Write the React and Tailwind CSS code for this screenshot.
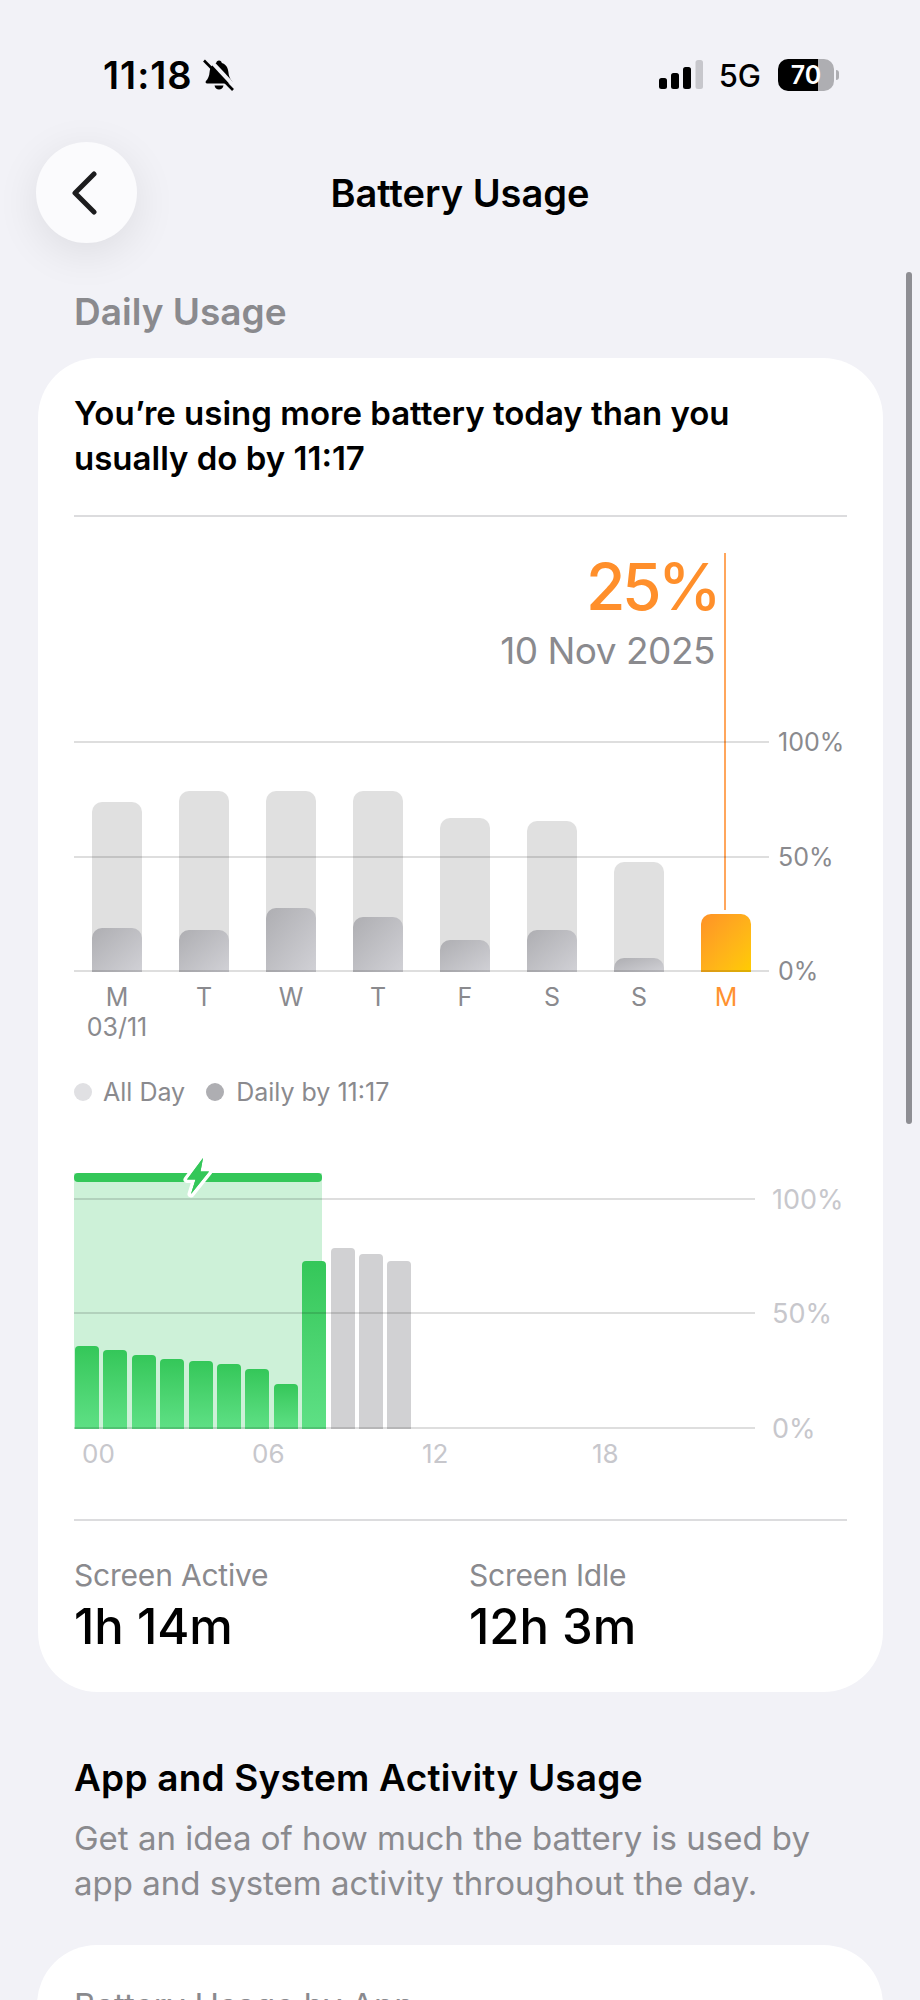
const week = [
  { day: "M", sub: "03/11", all: 170, daily: 44 },
  { day: "T", all: 181, daily: 42 },
  { day: "W", all: 181, daily: 64 },
  { day: "T", all: 181, daily: 55 },
  { day: "F", all: 154, daily: 32 },
  { day: "S", all: 151, daily: 42 },
  { day: "S", all: 110, daily: 14 },
  { day: "M", today: 58 },
];

const hours = [
  { h: 83, green: true },
  { h: 79, green: true },
  { h: 74, green: true },
  { h: 70, green: true },
  { h: 68, green: true },
  { h: 65, green: true },
  { h: 60, green: true },
  { h: 45, green: true },
  { h: 168, green: true },
  { h: 181 },
  { h: 175 },
  { h: 168 },
];

function StatusBar() {
  return (
    <div className="h-[142px] pt-[58px] pl-[103px] pr-[81px] flex justify-between items-start">
      <div className="flex items-center h-[34px] gap-[10px]">
        <span className="text-[38px] font-semibold leading-none tracking-[1px] text-black">11:18</span>
        <svg width="32" height="32" viewBox="0 0 32 32">
          <path d="M16 1.5c1.6 0 2.6 1 2.8 2.4 4 1.2 6.2 4.6 6.6 9 .3 4 1.4 6.6 3.6 9 .9 1 .3 2.6-1.2 2.6H4.2c-1.5 0-2.1-1.6-1.2-2.6 2.2-2.4 3.3-5 3.6-9 .4-4.4 2.6-7.8 6.6-9 .2-1.4 1.2-2.4 2.8-2.4z" fill="#000" />
          <path d="M11.5 26.500h9c-.4 2.400-2.300 4-4.500 4s-4.100-1.600-4.500-4z" fill="#000" />
          <path d="M5 -1L32 28" stroke="#f2f2f7" strokeWidth="4" />
          <path d="M1 1.500L30 31" stroke="#000" strokeWidth="2.600" />
        </svg>
      </div>
      <div className="flex items-center h-[34px]">
        <svg width="44" height="30" viewBox="0 0 44 30" className="mr-[16px]">
          <rect x="0" y="18" width="8" height="11" rx="2.500" fill="#000" />
          <rect x="12" y="13" width="8" height="16" rx="2.500" fill="#000" />
          <rect x="24" y="7" width="8" height="22" rx="2.500" fill="#000" />
          <rect x="36.500" y="0" width="7.500" height="29" rx="2.500" fill="#c7c7cc" />
        </svg>
        <span className="text-[31px] font-medium leading-none text-black mr-[17px]">5G</span>
        <div className="relative flex w-[56px] h-[32px] rounded-[10px] overflow-hidden">
          <div className="w-[40px] bg-black"></div>
          <div className="flex-1 bg-[#aeaeb2]"></div>
          <span className="absolute inset-0 flex items-center justify-center text-[25px] font-semibold leading-none text-white">70</span>
        </div>
        <div className="ml-[2px] w-[3px] h-[10px] rounded-r-[3px] bg-[#aeaeb2]"></div>
      </div>
    </div>
  );
}

function NavBar() {
  return (
    <div className="grid grid-cols-[100px_1fr_100px] items-center px-[36px] h-[100px]">
      <div className="w-[101px] h-[101px] rounded-full bg-[#fbfbfd] shadow-[0_10px_44px_rgba(0,0,0,0.09)] flex items-center justify-center">
        <svg width="30" height="44" viewBox="0 0 30 44" className="mr-[6px]">
          <path d="M25 3L6 22L25 41" fill="none" stroke="#1c1c1e" strokeWidth="5" strokeLinecap="round" strokeLinejoin="round" />
        </svg>
      </div>
      <div className="text-center text-[38px] font-semibold leading-[44px] text-black">Battery Usage</div>
      <div></div>
    </div>
  );
}

function GridLine({ className }) {
  return <div className={`absolute left-0 h-[2px] bg-black/[0.13] ${className}`}></div>;
}

function AxisLabel({ className, children }) {
  return <div className={`absolute leading-[32px] -translate-y-1/2 ${className}`}>{children}</div>;
}

function DailyChart() {
  return (
    <div className="relative mt-[36px]">
      <div className="absolute top-0 left-[650px] w-[2px] h-[357px] bg-[#ffa65c]"></div>
      <div className="w-[641px] pt-[2px] text-right">
        <div className="-mr-[3px] text-[64px] font-medium leading-[64px] tracking-[-3.500px] text-[#ff8f2b]">25%</div>
        <div className="mt-[10px] text-[37px] leading-[44px] tracking-[-0.5px] text-[#8a8a8e]">10 Nov 2025</div>
      </div>
      <div className="relative mt-[68px] h-[231px]">
        <div className="absolute bottom-0 -left-[0.500px] w-[696px] grid grid-cols-8 items-end">
          {week.map((d, i) => (
            <div key={i} className="relative h-[230px] flex justify-center items-end">
              {d.today ? (
                <div className="w-[50px] rounded-t-[10px] bg-linear-to-br from-[#ff9226] to-[#ffcc00]" style={{ height: d.today }}></div>
              ) : (
                <div className="relative w-[50px] rounded-t-[10px] bg-[#e0e0e0] overflow-hidden" style={{ height: d.all }}>
                  <div className="absolute bottom-0 left-0 w-full rounded-t-[10px] bg-linear-to-br from-[#aeaeb2] to-[#d1d1d6]" style={{ height: d.daily }}></div>
                </div>
              )}
            </div>
          ))}
        </div>
        <GridLine className="top-0 w-[695px]" />
        <GridLine className="top-[115px] w-[695px]" />
        <GridLine className="top-[229px] w-[695px]" />
        <div className="text-[25px] text-[#8a8a8e]">
          <AxisLabel className="top-[1px] left-[704px]">100%</AxisLabel>
          <AxisLabel className="top-[116px] left-[704px]">50%</AxisLabel>
          <AxisLabel className="top-[230px] left-[704px]">0%</AxisLabel>
        </div>
      </div>
      <div className="mt-[10px] -ml-[0.500px] w-[696px] grid grid-cols-8 text-center text-[25px] leading-[30px] text-[#8a8a8e]">
        {week.map((d, i) => (
          <div key={i} className={d.today ? "text-[#ff9230]" : ""}>
            <div>{d.day}</div>
            {d.sub ? <div>{d.sub}</div> : <div>&nbsp;</div>}
          </div>
        ))}
      </div>
      <div className="mt-[34px] flex items-center text-[25px] leading-[32px] text-[#8a8a8e]">
        <div className="w-[18px] h-[18px] rounded-full bg-[#e0e0e3]"></div>
        <span className="ml-[11px]">All Day</span>
        <div className="ml-[21px] w-[18px] h-[18px] rounded-full bg-[#aeaeb2]"></div>
        <span className="ml-[12px]">Daily by 11:17</span>
      </div>
    </div>
  );
}

function HourlyChart() {
  return (
    <div className="relative mt-[65px]">
      <div className="relative h-[256px]">
        <div className="absolute top-0 bottom-0 left-0 w-[248px] bg-[#cdf1d8]"></div>
        <div className="absolute bottom-0 left-[1px] flex items-end gap-[4.400px]">
          {hours.map((b, i) => (
            <div
              key={i}
              className={
                b.green
                  ? "w-[24px] rounded-t-[4px] bg-linear-to-b from-[#34c759] to-[#5ee085]"
                  : "w-[24px] rounded-t-[4px] bg-[#d1d1d3]"
              }
              style={{ height: b.h }}
            ></div>
          ))}
        </div>
        <GridLine className="top-[25px] w-[681px]" />
        <GridLine className="top-[139px] w-[681px]" />
        <GridLine className="top-[254px] w-[681px]" />
        <div className="absolute top-0 left-0 w-[248px] h-[9px] rounded-[4px] bg-[#34c759]"></div>
        {/* bolt sits across the charging bar */}
        <svg width="32" height="42" viewBox="0 0 32 42" className="absolute -top-[17px] left-[108px]">
          <path d="M21 2L5 23.500h8.500L9 38L27 15.500h-8.500z" fill="#34c759" stroke="#fff" strokeWidth="7" strokeLinejoin="round" paintOrder="stroke" />
          <path d="M21 2L5 23.500h8.500L9 38L27 15.500h-8.500z" fill="#34c759" />
        </svg>
        <div className="text-[27px] text-[#c7c7cc]">
          <AxisLabel className="top-[27px] left-[698px]">100%</AxisLabel>
          <AxisLabel className="top-[141px] left-[698px]">50%</AxisLabel>
          <AxisLabel className="top-[256px] left-[698px]">0%</AxisLabel>
        </div>
      </div>
      <div className="mt-[9px] w-[680px] grid grid-cols-4 text-[26px] leading-[32px] text-[#c7c7cc]">
        <div className="pl-[8px]">00</div>
        <div className="pl-[8px]">06</div>
        <div className="pl-[8px]">12</div>
        <div className="pl-[8px]">18</div>
      </div>
    </div>
  );
}

function Stat({ label, value }) {
  return (
    <div>
      <div className="text-[30px] leading-[36px] tracking-[-0.2px] text-[#8a8a8e]">{label}</div>
      <div className="mt-[6px] text-[49px] font-medium leading-[56px] text-black">{value}</div>
    </div>
  );
}

export default function App() {
  return (
    <div className="relative w-[920px] h-[2000px] overflow-hidden bg-[#f2f2f7] font-[Inter,sans-serif]">
      <StatusBar />
      <NavBar />
      <div className="absolute top-[272px] right-[8px] w-[6px] h-[852px] rounded-full bg-[#8e8e93]"></div>

      <div className="mt-[48px] pl-[74px] text-[37px] font-semibold leading-[44px] text-[#8a8a8e]">Daily Usage</div>

      <div className="mt-[24px] ml-[38px] w-[845px] rounded-[60px] bg-white px-[36px] pt-[33px] pb-[37px]">
        <div className="text-[33px] font-semibold leading-[45px] text-black">
          You’re using more battery today than you
          <br />
          usually do by 11:17
        </div>
        <div className="mt-[34px] h-[2px] bg-[#dcdcde]"></div>
        <DailyChart />
        <HourlyChart />
        <div className="mt-[49px] h-[2px] bg-[#dcdcde]"></div>
        <div className="mt-[36px] flex">
          <div className="w-[395px]">
            <Stat label="Screen Active" value="1h 14m" />
          </div>
          <Stat label="Screen Idle" value="12h 3m" />
        </div>
      </div>

      <div className="mt-[64px] px-[74px]">
        <div className="text-[37px] font-semibold leading-[44px] tracking-[0.2px] text-black">App and System Activity Usage</div>
        <div className="mt-[16px] text-[33px] leading-[45px] text-[#8a8a8e]">
          Get an idea of how much the battery is used by
          <br />
          app and system activity throughout the day.
        </div>
      </div>

      <div className="mt-[39px] ml-[37px] w-[846px] h-[200px] rounded-[60px] bg-white px-[37px] pt-[38px]">
        <div className="text-[33px] leading-[45px] text-[#8a8a8e]">Battery Usage by App</div>
      </div>
    </div>
  );
}
